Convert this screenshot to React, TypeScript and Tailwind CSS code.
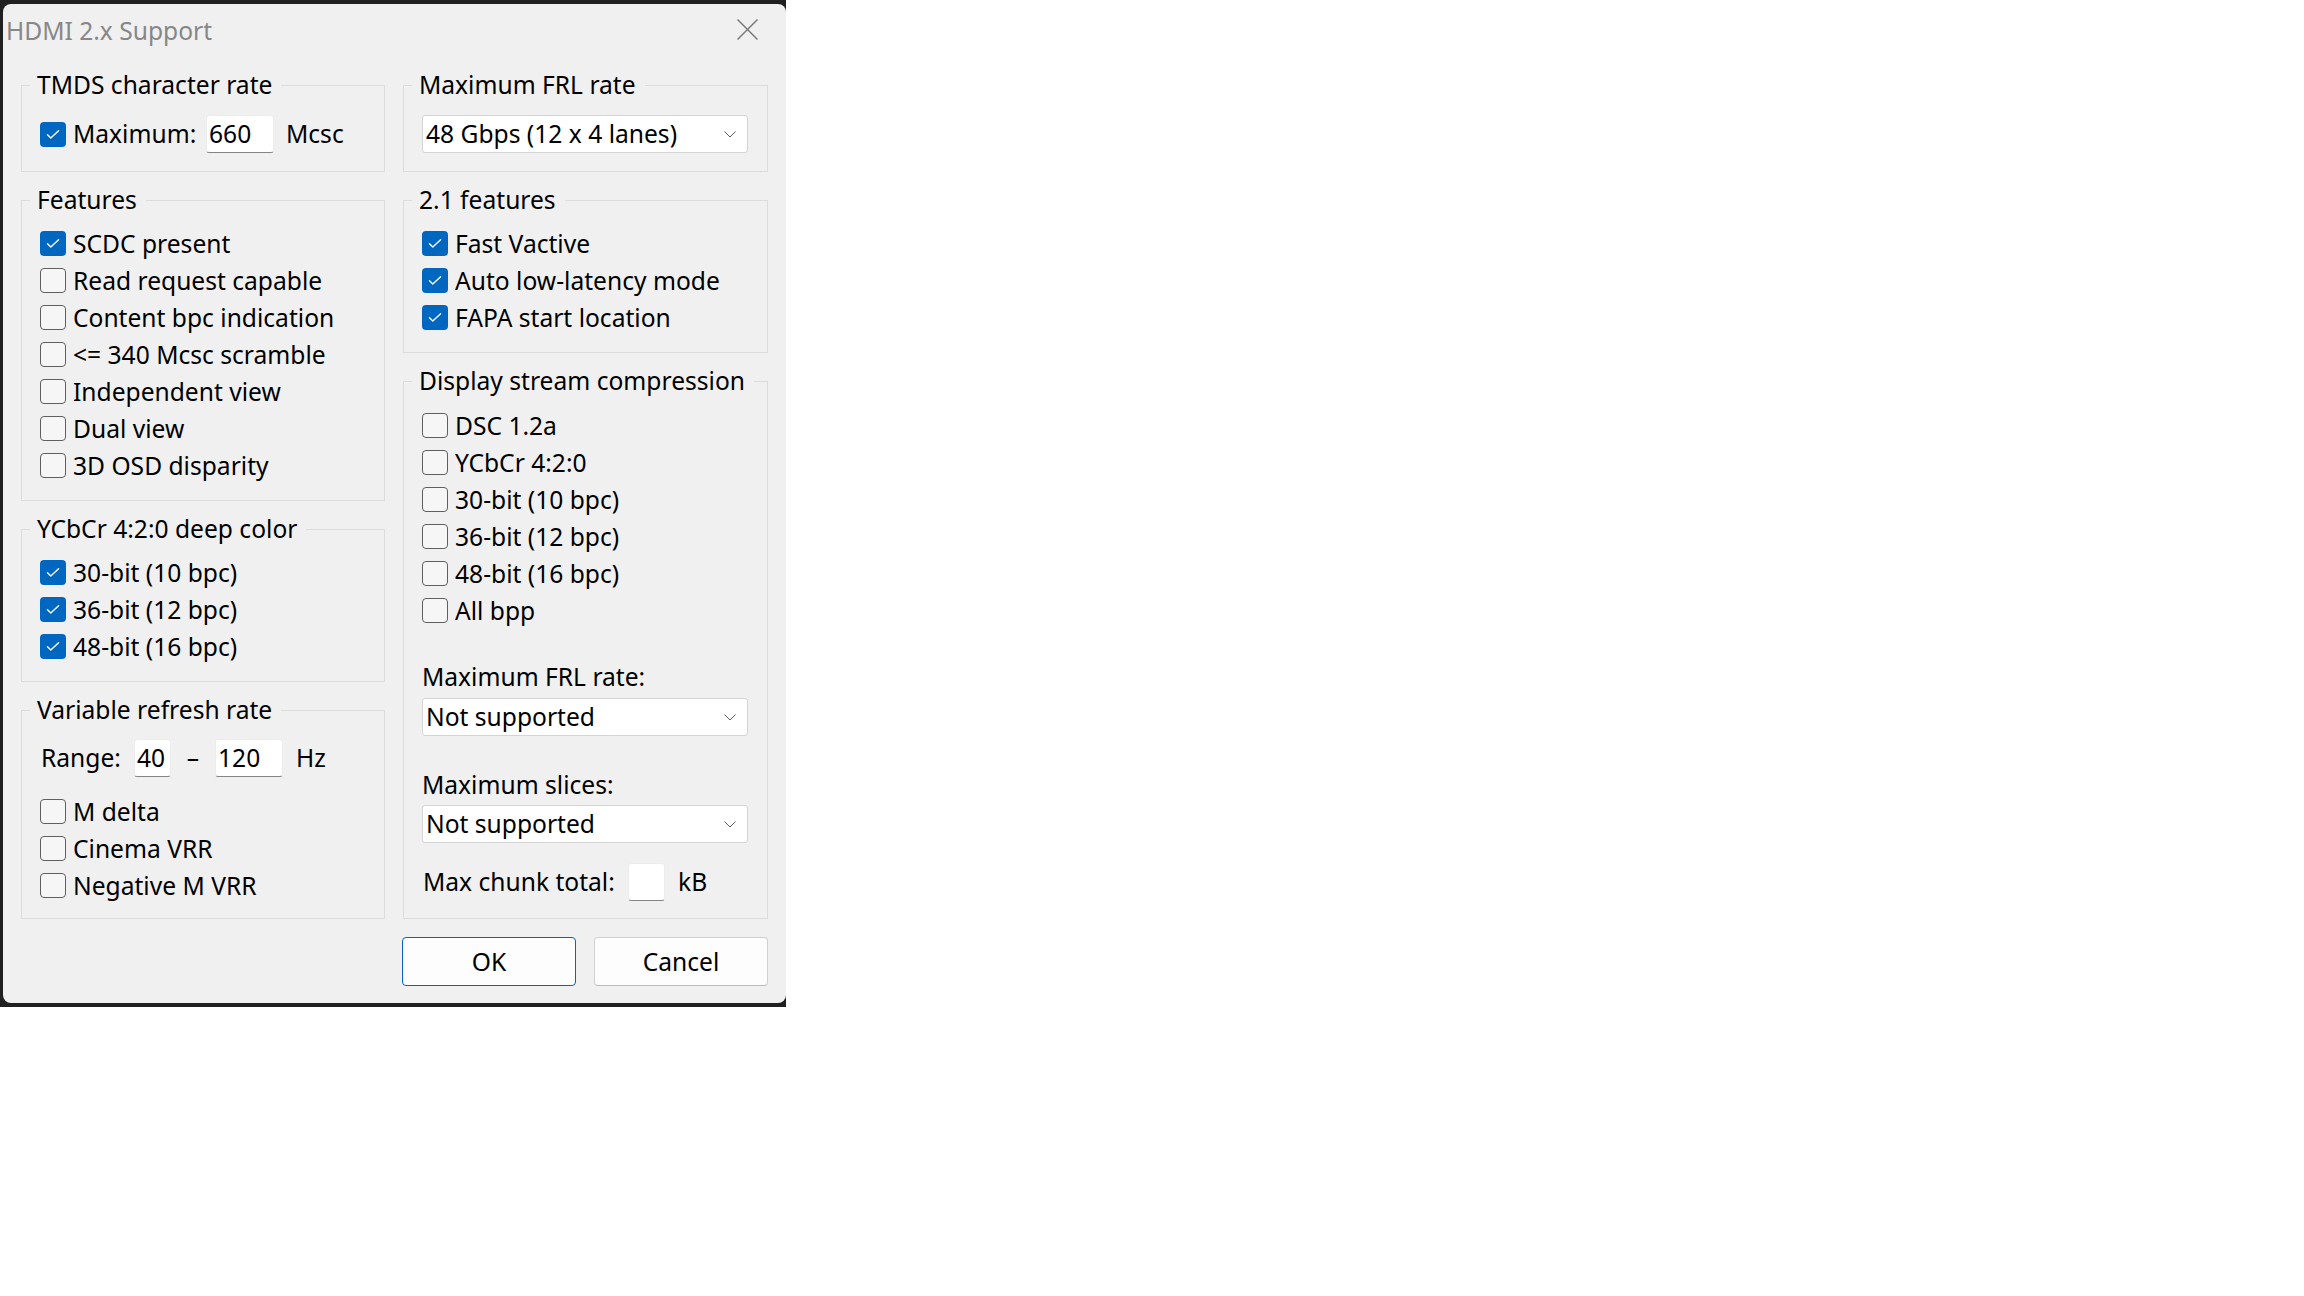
import type { ReactNode } from "react"

type Item = [string, boolean]

const features: Item[] = [
  ["SCDC present", true],
  ["Read request capable", false],
  ["Content bpc indication", false],
  ["<= 340 Mcsc scramble", false],
  ["Independent view", false],
  ["Dual view", false],
  ["3D OSD disparity", false],
]

const deepColor: Item[] = [
  ["30-bit (10 bpc)", true],
  ["36-bit (12 bpc)", true],
  ["48-bit (16 bpc)", true],
]

const vrr: Item[] = [
  ["M delta", false],
  ["Cinema VRR", false],
  ["Negative M VRR", false],
]

const frlFeatures: Item[] = [
  ["Fast Vactive", true],
  ["Auto low-latency mode", true],
  ["FAPA start location", true],
]

const dsc: Item[] = [
  ["DSC 1.2a", false],
  ["YCbCr 4:2:0", false],
  ["30-bit (10 bpc)", false],
  ["36-bit (12 bpc)", false],
  ["48-bit (16 bpc)", false],
  ["All bpp", false],
]

function Box({ on = false }: { on?: boolean }) {
  if (on) {
    return (
      <span className="block h-[25px] w-[26px] shrink-0 rounded-[4px] bg-[#0067c0]">
        <svg viewBox="0 0 26 25" className="h-[25px] w-[26px]" fill="none" stroke="#ffffff" strokeWidth={1.4} strokeLinecap="round" strokeLinejoin="round">
          <path d="M7.5 12.8 10.8 16 18.6 8.8" />
        </svg>
      </span>
    )
  }
  return <span className="block h-[25px] w-[26px] shrink-0 rounded-[4px] border border-[#5f5f5f] bg-[#f6f6f6]" />
}

function Check({ label, on }: { label: string; on: boolean }) {
  return (
    <div className="flex h-[37px] items-center gap-[7px] whitespace-nowrap">
      <Box on={on} />
      <span>{label}</span>
    </div>
  )
}

function Checks({ items }: { items: Item[] }) {
  return (
    <>
      {items.map(([label, on]) => (
        <Check key={label} label={label} on={on} />
      ))}
    </>
  )
}

function Group({ title, className = "", children }: { title: string; className?: string; children: ReactNode }) {
  return (
    <fieldset className={`min-w-0 border border-[#dcdcdc] px-[18px] ${className}`}>
      <legend className="-ml-[10px] whitespace-nowrap pl-[7px] pr-[9px] leading-[32px]">{title}</legend>
      {children}
    </fieldset>
  )
}

function Field({ value = "", className = "" }: { value?: string; className?: string }) {
  return (
    <span className={`flex h-[38px] shrink-0 items-center rounded-[3px] border border-[#ececec] border-b-[#858585] bg-white pl-[2px] ${className}`}>
      {value}
    </span>
  )
}

function Combo({ value }: { value: string }) {
  return (
    <div className="flex h-[38px] w-[326px] items-center justify-between rounded-[3px] border border-[#d4d4d4] bg-white pl-[3px] pr-[11px]">
      <span>{value}</span>
      <svg viewBox="0 0 12 7" className="h-[7px] w-[12px]" fill="none" stroke="#5c5c5c" strokeWidth={1}>
        <path d="M0.5 0.5 6 6 11.5 0.5" />
      </svg>
    </div>
  )
}

export default function App() {
  return (
    <div className="min-h-screen w-full bg-white font-['Noto_Sans','Open_Sans',sans-serif] text-[24.6px] leading-[32px] text-black">
      <div className="flex h-[1007px] w-[786px] bg-[#202020] pl-[3px] pt-[4px]">
        <div className="flex h-[999px] w-[783px] flex-col rounded-[8px] bg-[#f0f0f0]">
          {/* title bar */}
          <div className="flex h-[65px] shrink-0 items-start justify-between">
            <span className="pl-[3px] pt-[11px] text-[#878787]">HDMI 2.x Support</span>
            <svg viewBox="0 0 21 21" className="mr-[28px] mt-[15px] h-[21px] w-[21px]" fill="none" stroke="#7a7a7a" strokeWidth={1.5}>
              <path d="M0.5 0.5 20.5 20.5M20.5 0.5 0.5 20.5" />
            </svg>
          </div>

          <div className="flex gap-[18px] pl-[18px]">
            {/* left column */}
            <div className="flex w-[364px] flex-col gap-[12px]">
              <Group title="TMDS character rate" className="pb-[18px] pt-[14px]">
                <div className="flex h-[38px] items-center whitespace-nowrap">
                  <Box on />
                  <span className="ml-[7px] w-[133px]">Maximum:</span>
                  <Field value="660" className="w-[68px]" />
                  <span className="ml-[12px]">Mcsc</span>
                </div>
              </Group>

              <Group title="Features" className="pb-[16px] pt-[9px]">
                <Checks items={features} />
              </Group>

              <Group title="YCbCr 4:2:0 deep color" className="pb-[16px] pt-[9px]">
                <Checks items={deepColor} />
              </Group>

              <Group title="Variable refresh rate" className="pb-[14px] pt-[13px]">
                <div className="flex h-[38px] items-center whitespace-nowrap">
                  <span className="w-[94px] pl-[1px]">Range:</span>
                  <Field value="40" className="w-[37px]" />
                  <span className="w-[44px] text-center">–</span>
                  <Field value="120" className="w-[68px]" />
                  <span className="ml-[13px]">Hz</span>
                </div>
                <div className="mt-[16px]">
                  <Checks items={vrr} />
                </div>
              </Group>
            </div>

            {/* right column */}
            <div className="flex w-[365px] flex-col gap-[12px]">
              <Group title="Maximum FRL rate" className="pb-[18px] pt-[14px]">
                <Combo value="48 Gbps (12 x 4 lanes)" />
              </Group>

              <Group title="2.1 features" className="pb-[16px] pt-[9px]">
                <Checks items={frlFeatures} />
              </Group>

              <Group title="Display stream compression" className="pb-[17px] pt-[10px]">
                <Checks items={dsc} />
                <p className="mt-[32px]">Maximum FRL rate:</p>
                <div className="mt-[5px]">
                  <Combo value="Not supported" />
                </div>
                <p className="mt-[33px]">Maximum slices:</p>
                <div className="mt-[4px]">
                  <Combo value="Not supported" />
                </div>
                <div className="mt-[20px] flex h-[38px] items-center whitespace-nowrap">
                  <span className="w-[206px] pl-[1px]">Max chunk total:</span>
                  <Field className="w-[37px]" />
                  <span className="ml-[13px]">kB</span>
                </div>
              </Group>
            </div>
          </div>

          <div className="mt-[18px] flex justify-end gap-[18px] pr-[18px]">
            <button className="h-[49px] w-[174px] rounded-[4px] border border-[#0067c0] bg-[#fdfdfd]">OK</button>
            <button className="h-[49px] w-[174px] rounded-[4px] border border-[#d0d0d0] border-b-[#bababa] bg-[#fdfdfd]">Cancel</button>
          </div>
        </div>
      </div>
    </div>
  )
}
